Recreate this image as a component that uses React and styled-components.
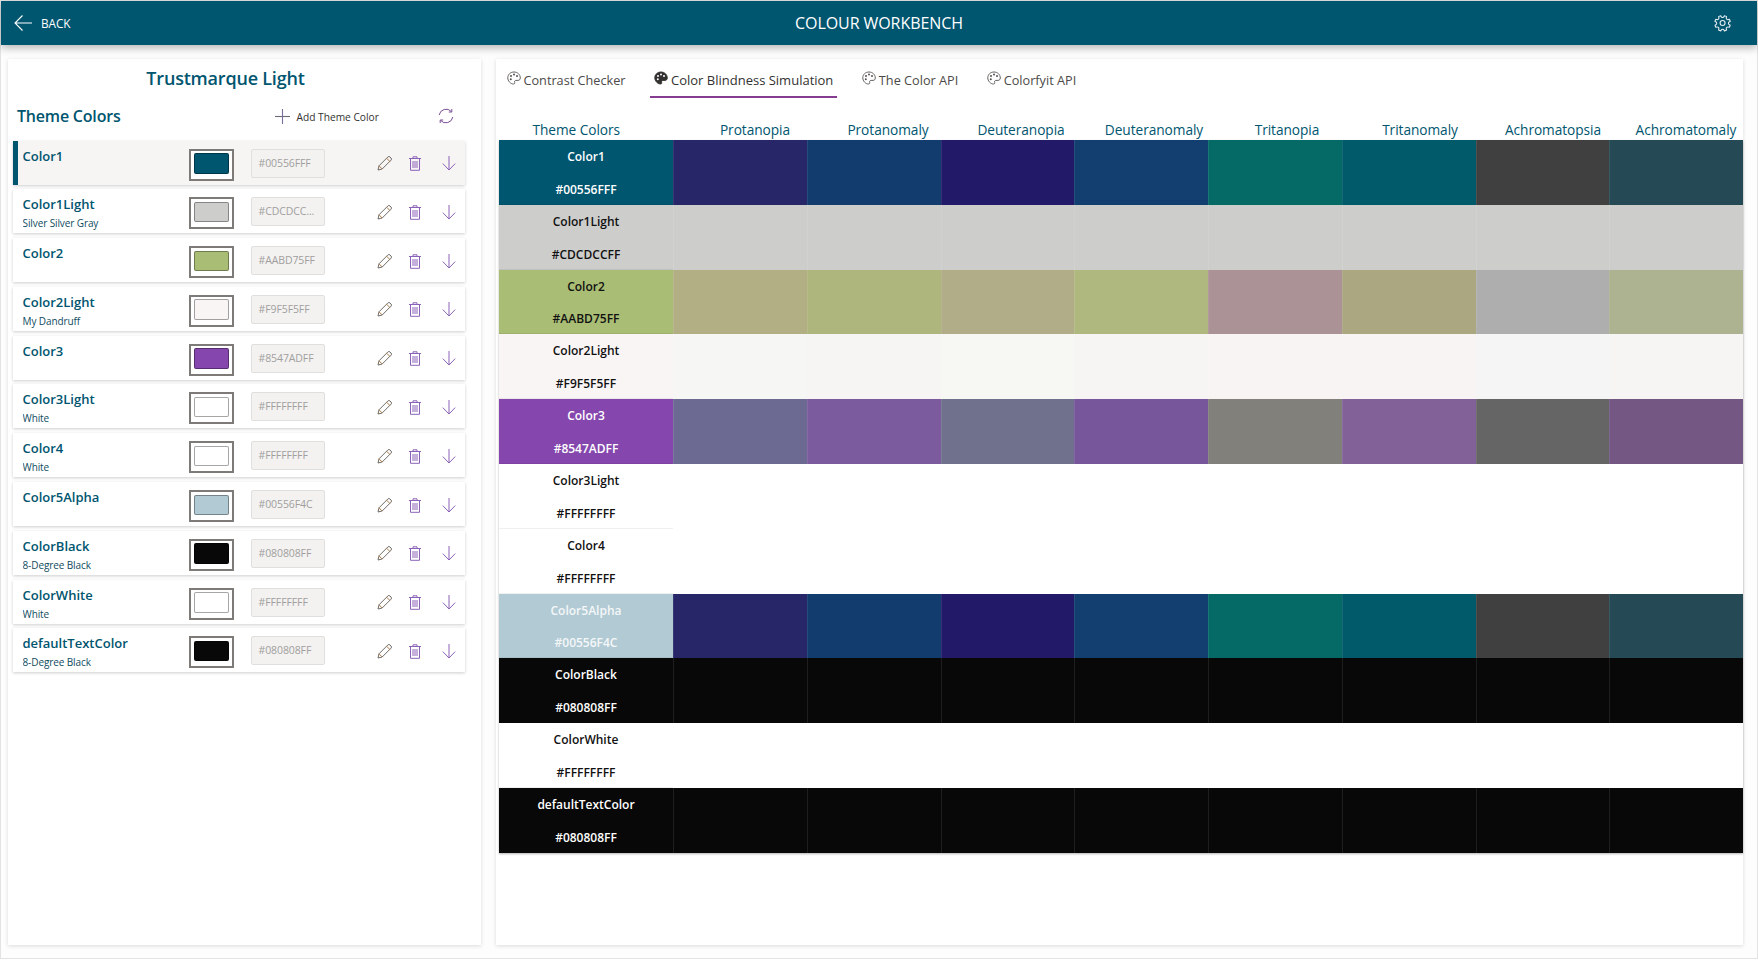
import React from "react";
import styled, { createGlobalStyle } from "styled-components";

const FONT = `"Open Sans", "Noto Sans", sans-serif`;
const TEAL = "#00556f";
const PURPLE = "#8a63b8";

const Global = createGlobalStyle`
  html, body { margin: 0; padding: 0; background: #fff; }
  body { font-family: ${FONT}; width: 1758px; height: 960px; overflow: hidden; }
`;

const Page = styled.div`
  box-sizing: border-box;
  width: 1758px;
  height: 959px;
  border: 1px solid #e3e3e3;
  display: flex;
  flex-direction: column;
  background: #fdfdfd;
`;
const Header = styled.header`
  position: relative;
  z-index: 2;
  height: 44px;
  flex: none;
  background: ${TEAL};
  box-shadow: 0 3px 8px rgba(0, 0, 0, 0.28);
  color: #fff;
  display: grid;
  grid-template-columns: 1fr auto 1fr;
  align-items: center;
  padding: 0 13px;
`;
const BackLink = styled.div`
  display: flex;
  align-items: center;
  gap: 9px;
  font-size: 11.8px;
  letter-spacing: -0.1px;
`;
const HeaderTitle = styled.div`
  font-size: 16px;
  letter-spacing: -0.08px;
`;
const HeaderRight = styled.div`
  display: flex;
  justify-content: flex-end;
  padding-right: 11px;
`;
const Main = styled.main`
  flex: 1;
  min-height: 0;
  display: flex;
  gap: 15px;
  padding: 14px 14px 13px 7px;
`;
const LeftPanel = styled.section`
  width: 473px;
  flex: none;
  box-sizing: border-box;
  background: #fff;
  box-shadow: 0 1px 4px rgba(0, 0, 0, 0.14);
  padding: 0 16px 0 5px;
`;
const PanelTitle = styled.h1`
  margin: 7px 0 0;
  height: 24px;
  line-height: 24px;
  text-align: center;
  font-size: 18px;
  font-weight: 600;
  color: ${TEAL};
  letter-spacing: -0.2px;
  padding-right: 27px;
`;
const ThemeBar = styled.div`
  height: 25px;
  margin-top: 13px;
  display: flex;
  align-items: center;
  padding-left: 4px;
`;
const ThemeHeading = styled.h2`
  margin: 0;
  font-size: 16px;
  font-weight: 600;
  color: ${TEAL};
  letter-spacing: -0.2px;
  width: 258px;
`;
const AddButton = styled.div`
  display: flex;
  align-items: center;
  gap: 6.5px;
  font-size: 10.2px;
  color: #323130;
  width: 163px;
  padding-top: 2px;
`;
const RowList = styled.div`
  margin-top: 12.5px;
  display: flex;
  flex-direction: column;
  gap: 4.8px;
`;
const Row = styled.div`
  position: relative;
  box-sizing: border-box;
  height: 44px;
  background: ${(p) => (p.$selected ? "#f7f4f4" : "#fff")};
  box-shadow: 0 1px 3px rgba(0, 0, 0, 0.2);
  display: flex;
  border-left: ${(p) => (p.$selected ? `5px solid ${TEAL}` : "0")};
  padding-left: ${(p) => (p.$selected ? "4.5px" : "9.5px")};
`;
const RowText = styled.div`
  width: 166.5px;
  flex: none;
  padding-top: 5px;
  overflow: hidden;
`;
const RowName = styled.div`
  font-size: 13px;
  line-height: 20px;
  font-weight: 600;
  color: ${TEAL};
`;
const RowSub = styled.div`
  font-size: 10px;
  line-height: 14px;
  margin-top: 2px;
  color: #0f4c60;
  letter-spacing: -0.1px;
`;
const Swatch = styled.div`
  box-sizing: border-box;
  width: 44.5px;
  height: 32px;
  flex: none;
  margin-top: 8px;
  border: 2px solid #7d7a78;
  background: #fff;
  padding: 2.5px 2.5px 5px;
`;
const SwatchFill = styled.div`
  height: 100%;
  box-sizing: border-box;
  border: 1px solid rgba(0, 0, 0, 0.35);
  border-radius: 2px;
  background: ${(p) => p.$color};
`;
const HexInput = styled.div`
  box-sizing: border-box;
  width: 74px;
  height: 29px;
  margin: 8px 0 0 17px;
  flex: none;
  background: #f3f2f1;
  border: 1px solid #e1dfdd;
  border-radius: 2px;
  color: #a19f9d;
  font-size: 10.5px;
  letter-spacing: -0.1px;
  line-height: 27px;
  padding-left: 7px;
  overflow: hidden;
  white-space: nowrap;
`;
const RowActions = styled.div`
  display: flex;
  align-items: center;
  margin-left: 52px;
  margin-top: 3px;
  gap: 17.5px;
  height: 40px;
`;
const ArrowSlot = styled.span`
  display: flex;
  margin-left: 3px;
`;
const RightPanel = styled.section`
  flex: 1;
  min-width: 0;
  box-sizing: border-box;
  background: #fff;
  box-shadow: 0 1px 4px rgba(0, 0, 0, 0.14);
  padding: 0 0 0 3px;
`;
const Tabs = styled.nav`
  display: flex;
  gap: 20.5px;
  height: 39px;
  margin-left: 3.5px;
`;
const Tab = styled.div`
  box-sizing: border-box;
  height: 39px;
  display: flex;
  align-items: center;
  gap: 3px;
  padding: 4px 4px 0;
  font-size: ${(p) => (p.$active ? "13px" : "12.7px")};
  font-weight: ${(p) => (p.$active ? 500 : 400)};
  color: ${(p) => (p.$active ? "#323130" : "#4c4a48")};
  border-bottom: 2px solid ${(p) => (p.$active ? "#863d91" : "transparent")};
  white-space: nowrap;
`;
const PaletteIcon = styled.svg`
  width: 14px;
  height: 14px;
  flex: none;
  margin-bottom: 4px;
`;
const HeadRow = styled.div`
  display: grid;
  grid-template-columns: 189.5px repeat(8, 133px);
  height: 25px;
  margin-top: 17px;
  align-items: end;
`;
const HeadCell = styled.div`
  text-align: center;
  font-size: 13.7px;
  font-weight: 500;
  line-height: 20px;
  color: ${TEAL};
  letter-spacing: -0.05px;
  white-space: nowrap;
  padding-right: ${(p) => (p.$first ? "35px" : "0")};
`;
const TableBody = styled.div`
  width: 1244px;
  box-shadow: 0 1px 2px rgba(0, 0, 0, 0.3);
`;
const TableRow = styled.div`
  display: grid;
  grid-template-columns: 174px repeat(8, 1fr);
  height: 64.8px;
`;
const NameCell = styled.div`
  background: ${(p) => p.$bg};
  color: ${(p) => p.$fg};
  box-shadow: inset 0 -1px 0 rgba(0, 0, 0, 0.06);
  font-size: 12px;
  font-weight: 600;
  text-align: center;
  display: flex;
  flex-direction: column;
  justify-content: space-between;
  padding: 8px 0 6px;
  box-sizing: border-box;
  line-height: 18px;
`;
const SimCell = styled.div`
  background: ${(p) => p.$bg};
  box-shadow: inset 1px 0 0 rgba(255, 255, 255, 0.09);
`;

const ArrowLeft = () => (
  <svg width="18" height="18" viewBox="0 0 18 18" fill="none" stroke="#fff" strokeWidth="1.1">
    <path d="M18 9H1M8.5 1.5 1 9l7.5 7.5" />
  </svg>
);
const Gear = () => (
  <svg width="20" height="20" viewBox="0 0 24 24" fill="none" stroke="#e8f0f3" strokeWidth="1.3" strokeLinejoin="round">
    <path d="M9.67 4.14a2 2 0 0 0 3.66 0l.4-.9a9 9 0 0 1 2.6 1.1l-.3.9a2 2 0 0 0 2.6 2.6l.9-.3a9 9 0 0 1 1.1 2.6l-.9.4a2 2 0 0 0 0 3.66l.9.4a9 9 0 0 1-1.1 2.6l-.9-.3a2 2 0 0 0-2.6 2.6l.3.9a9 9 0 0 1-2.6 1.1l-.4-.9a2 2 0 0 0-3.66 0l-.4.9a9 9 0 0 1-2.6-1.1l.3-.9a2 2 0 0 0-2.6-2.6l-.9.3a9 9 0 0 1-1.1-2.6l.9-.4a2 2 0 0 0 0-3.66l-.9-.4a9 9 0 0 1 1.1-2.6l.9.3a2 2 0 0 0 2.6-2.6l-.3-.9a9 9 0 0 1 2.6-1.1z" />
    <circle cx="11.5" cy="12" r="3" />
  </svg>
);
const Plus = () => (
  <svg width="15" height="15" viewBox="0 0 15 15" fill="none" strokeWidth="1.1">
    <path d="M0 7.5h15" stroke="#6b6a75" />
    <path d="M7.5 0v15" stroke="#7a6d9a" />
  </svg>
);
const Sync = () => (
  <svg width="16" height="16" viewBox="0 0 16 16" fill="none" stroke="#7b4f97" strokeWidth="1">
    <path d="M1.2 7A7 7 0 0 1 13.4 3.6M14.8 9a7 7 0 0 1-12.2 3.4" />
    <path d="M13.8 1v3h-3M2.2 15v-3h3" />
  </svg>
);
const Pencil = () => (
  <svg width="15" height="15" viewBox="0 0 15 15" fill="none" stroke="#6f6b68" strokeWidth="1">
    <path d="M1 14l1-4.2L10.8 1a1.5 1.5 0 0 1 2.2 0l1 1a1.5 1.5 0 0 1 0 2.2L5.2 13z" />
    <path d="M2 9.8 5.2 13M9.6 2.2l3.2 3.2" stroke="#b0793f" />
  </svg>
);
const Trash = () => (
  <svg width="12" height="15" viewBox="0 0 12 15" fill="none" stroke={PURPLE} strokeWidth="1">
    <path d="M0 2.5h12M4 2.5V.8h4v1.7M1.5 2.5v11.800h9V2.5M4 5v7M6 5v7M8 5v7" />
  </svg>
);
const ArrowDown = () => (
  <svg width="14" height="15" viewBox="0 0 14 15" fill="none" stroke={PURPLE} strokeWidth="1">
    <path d="M7 0v14M.8 7.6 7 14l6.200-6.400" />
  </svg>
);
const Palette = ({ filled }) => (
  <PaletteIcon viewBox="0 0 14 14">
    <path
      d="M7 1C3.400 1 .8 3.500.8 6.800c0 3.200 2.700 6.200 5.600 6.200 1.200 0 1.600-.8 1.300-1.600-.4-1 .1-2 1.300-2h2c1.400 0 2.300-1 2.300-2.400C13.300 3.600 10.600 1 7 1z"
      fill={filled ? "#323130" : "none"}
      stroke={filled ? "#323130" : "#55524f"}
      strokeWidth="0.9"
    />
    <g fill={filled ? "#fff" : "#55524f"}>
      <circle cx="4" cy="5" r="1" />
      <circle cx="7" cy="3.400" r="1" />
      <circle cx="10" cy="5" r="1" />
      <circle cx="3.800" cy="8.300" r="1" />
    </g>
  </PaletteIcon>
);

const themeRows = [
  ["Color1", "", "#00556f", "#00556FFF", true],
  ["Color1Light", "Silver Silver Gray", "#cdcdcc", "#CDCDCC..."],
  ["Color2", "", "#aabd75", "#AABD75FF"],
  ["Color2Light", "My Dandruff", "#f9f5f5", "#F9F5F5FF"],
  ["Color3", "", "#8547ad", "#8547ADFF"],
  ["Color3Light", "White", "#ffffff", "#FFFFFFFF"],
  ["Color4", "White", "#ffffff", "#FFFFFFFF"],
  ["Color5Alpha", "", "#b2cad3", "#00556F4C"],
  ["ColorBlack", "8-Degree Black", "#080808", "#080808FF"],
  ["ColorWhite", "White", "#ffffff", "#FFFFFFFF"],
  ["defaultTextColor", "8-Degree Black", "#080808", "#080808FF"],
];

const simColumns = ["Protanopia", "Protanomaly", "Deuteranopia", "Deuteranomaly", "Tritanopia", "Tritanomaly", "Achromatopsia", "Achromatomaly"];
const tealSim = ["#272668", "#123b6e", "#221a68", "#123f70", "#056a66", "#015a6a", "#404040", "#254a56"];
const rep = (c) => Array(8).fill(c);
const tableRows = [
  ["Color1", "#00556FFF", "#00556f", "#fff", tealSim],
  ["Color1Light", "#CDCDCCFF", "#cdcdcc", "#111", rep("#cdcdcc")],
  ["Color2", "#AABD75FF", "#aabd75", "#111", ["#b2af84", "#aeb67d", "#b1ad88", "#afb87f", "#aa9296", "#aba780", "#aeaeae", "#adb391"]],
  ["Color2Light", "#F9F5F5FF", "#f9f5f5", "#111", ["#f6f6f4", "#f6f5f4", "#f7f8f4", "#f6f5f4", "#f8f4f3", "#f8f4f3", "#f5f5f5", "#f6f5f4"]],
  ["Color3", "#8547ADFF", "#8547ad", "#fff", ["#6c6a92", "#7b5b9d", "#6f718d", "#78569b", "#82807b", "#826198", "#656565", "#745783"]],
  ["Color3Light", "#FFFFFFFF", "#ffffff", "#111", rep("#ffffff")],
  ["Color4", "#FFFFFFFF", "#ffffff", "#111", rep("#ffffff")],
  ["Color5Alpha", "#00556F4C", "#b2cad3", "#f4f7f9", tealSim],
  ["ColorBlack", "#080808FF", "#080808", "#fff", rep("#080808")],
  ["ColorWhite", "#FFFFFFFF", "#ffffff", "#111", rep("#ffffff")],
  ["defaultTextColor", "#080808FF", "#080808", "#fff", rep("#080808")],
];

const tabs = [
  ["Contrast Checker", false],
  ["Color Blindness Simulation", true],
  ["The Color API", false],
  ["Colorfyit API", false],
];

export default function App() {
  return (
    <Page>
      <Global />
      <Header>
        <BackLink>
          <ArrowLeft />
          BACK
        </BackLink>
        <HeaderTitle>COLOUR WORKBENCH</HeaderTitle>
        <HeaderRight>
          <Gear />
        </HeaderRight>
      </Header>
      <Main>
        <LeftPanel>
          <PanelTitle>Trustmarque Light</PanelTitle>
          <ThemeBar>
            <ThemeHeading>Theme Colors</ThemeHeading>
            <AddButton>
              <Plus />
              Add Theme Color
            </AddButton>
            <Sync />
          </ThemeBar>
          <RowList>
            {themeRows.map(([name, sub, color, hex, selected]) => (
              <Row key={name} $selected={selected}>
                <RowText>
                  <RowName>{name}</RowName>
                  {sub && <RowSub>{sub}</RowSub>}
                </RowText>
                <Swatch>
                  <SwatchFill $color={color} />
                </Swatch>
                <HexInput>{hex}</HexInput>
                <RowActions>
                  <Pencil />
                  <Trash />
                  <ArrowSlot>
                    <ArrowDown />
                  </ArrowSlot>
                </RowActions>
              </Row>
            ))}
          </RowList>
        </LeftPanel>
        <RightPanel>
          <Tabs>
            {tabs.map(([label, active]) => (
              <Tab key={label} $active={active}>
                <Palette filled={active} />
                {label}
              </Tab>
            ))}
          </Tabs>
          <HeadRow>
            <HeadCell $first>Theme Colors</HeadCell>
            {simColumns.map((c) => (
              <HeadCell key={c}>{c}</HeadCell>
            ))}
          </HeadRow>
          <TableBody>
            {tableRows.map(([name, hex, bg, fg, sims]) => (
              <TableRow key={name}>
                <NameCell $bg={bg} $fg={fg}>
                  <span>{name}</span>
                  <span>{hex}</span>
                </NameCell>
                {sims.map((s, i) => (
                  <SimCell key={i} $bg={s} />
                ))}
              </TableRow>
            ))}
          </TableBody>
        </RightPanel>
      </Main>
    </Page>
  );
}
